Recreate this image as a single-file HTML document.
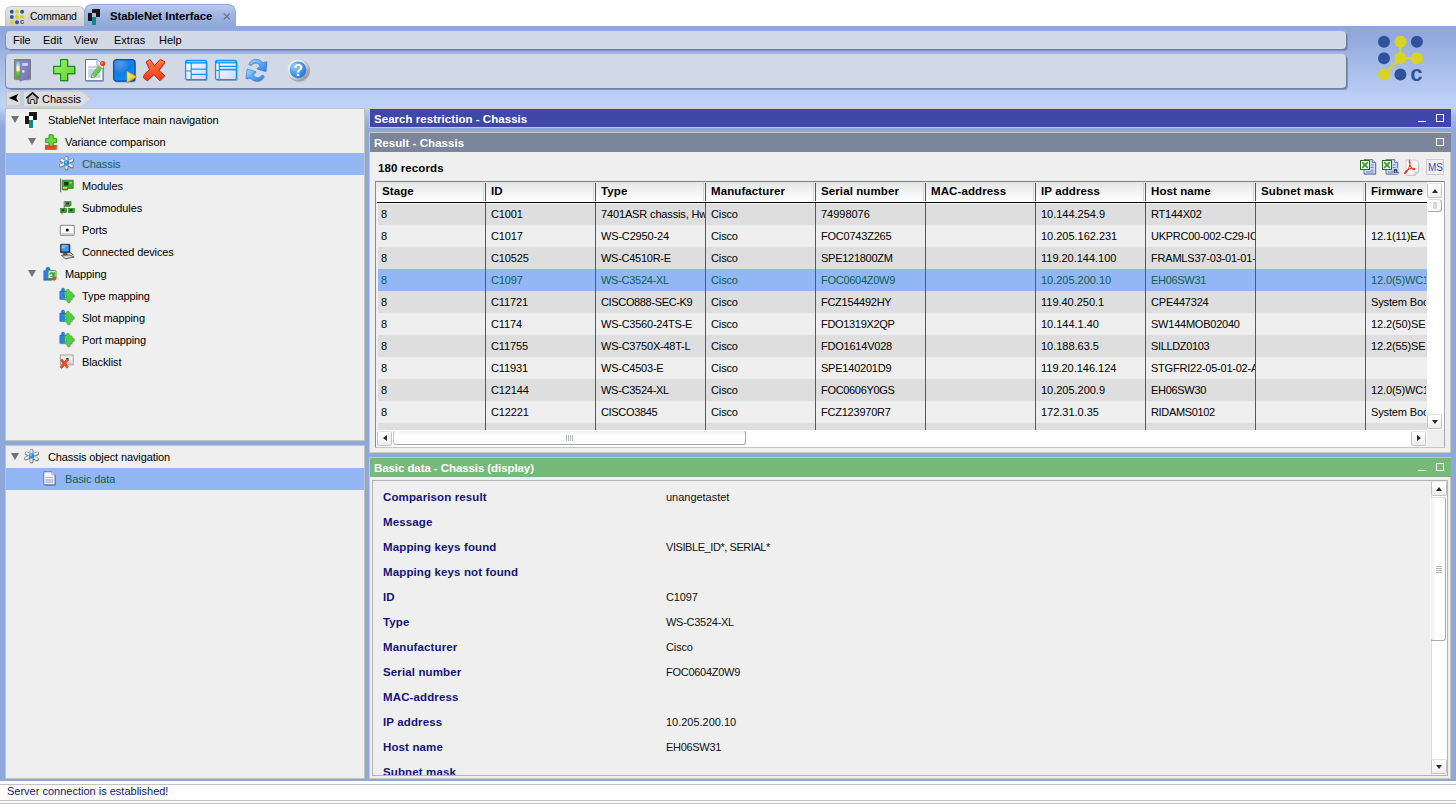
<!DOCTYPE html>
<html lang="en">
<head>
<meta charset="utf-8">
<title>StableNet Interface</title>
<style>
*{box-sizing:border-box;margin:0;padding:0}
html,body{width:1456px;height:804px;overflow:hidden;background:#fff}
body{position:relative;font-family:"Liberation Sans",Arial,sans-serif;font-size:11px;color:#000;line-height:1}
.abs{position:absolute}
svg{position:absolute;overflow:visible}
#hdrbg{position:absolute;left:0;top:26px;width:1456px;height:82px;background:linear-gradient(#8fa7da 0,#90a8dc 8px,#bccff4 72px,#c0d3f7 82px)}
#mainbg{position:absolute;left:0;top:108px;width:1456px;height:673px;background:linear-gradient(#bdd0f5 0,#a3b9e6 9px,#8fa8dc 20px,#8fa8dc 100%)}
/* tabs */
.tab{position:absolute;white-space:nowrap}
#tab1{left:5px;top:6px;width:80px;height:20px;background:linear-gradient(#e6e6e6,#cdcdcd);border:1px solid #c6c6c6;border-bottom:none;border-radius:6px 6px 0 0}
#tab2{left:84px;top:4px;width:152px;height:22px;background:linear-gradient(#bccbef,#a0b5e3 45%,#8fa7da);border:1px solid #8fa8de;border-bottom:none;border-radius:8px 8px 0 0}
#tab1 span{position:absolute;left:24px;top:4px;font-size:10.5px;letter-spacing:-.25px}
#tab2 span{position:absolute;left:25px;top:6px;font-weight:bold;font-size:11.3px}
#tab2 i{position:absolute;left:135px;top:3px;font-style:normal;font-size:13px;color:#6b7694}
/* bars */
.bar{position:absolute;left:6px;width:1340px;background:#d1d8e6;border-radius:4px;box-shadow:1px 1px 0 #6e7fa8,2px 2px 0 #8090b8,-1px 1px 0 #8091b9}
#menubar{top:31px;height:18px}
#toolbar{top:54px;height:34px}
#menubar span{position:absolute;top:4px;font-size:11px}
/* breadcrumb */
#back{position:absolute;left:6px;top:91px;width:15px;height:15px;background:#dcdcdc;border:1px solid #c8c8c8}
#crumb{position:absolute;left:23px;top:91px;width:68px;height:15px}
#crumb span{position:absolute;left:19px;top:3px;font-size:11px}
/* panels */
.panel{position:absolute;background:#efefef;border:1px solid #c2c2c2}
.trow{position:absolute;left:0;width:100%;height:22px}
.trow.sel{background:#93b6f5;color:#0a6350}
.trow span{position:absolute;top:6px;white-space:nowrap;letter-spacing:-.11px}
.tri{position:absolute;top:7px;width:0;height:0;border-left:4px solid transparent;border-right:4px solid transparent;border-top:7.5px solid #6e7575}
/* right headers */
.rp{position:absolute;left:369px;width:1082px;background:#efefef;border:1px solid #cbc8c2}
.hd{position:absolute;left:370px;width:1081px;height:19px;color:#fff;font-weight:bold;font-size:11.5px}
.hd span{position:absolute;left:4px;top:5px;letter-spacing:.04px;white-space:nowrap}
.hd .min{position:absolute;left:1048px;top:12px;width:8px;height:1px;background:#fff}
.hd .max{position:absolute;left:1066px;top:5px;width:8px;height:8px;border:1px solid #fff}
/* table */
#tbl{position:absolute;left:375px;top:181px;width:1070px;height:267px;border:1px solid #788282;border-right-color:#a2aaaa;border-bottom-color:#c2c6c6;border-left-color:#868e8e;background:#efefef}
#tin{position:absolute;left:1px;top:0;width:1050px;height:248px;overflow:hidden}
.th{position:absolute;top:0;height:20px;background:linear-gradient(#e5e5e5,#f4f4f4 50%,#ffffff);font-weight:bold;font-size:11.5px}
.th span{position:absolute;left:5px;top:4px;white-space:nowrap;letter-spacing:.1px}
#thline{position:absolute;left:0;top:20px;width:1050px;height:2px;background:linear-gradient(#0a0a0a 0,#0a0a0a 1px,rgba(255,255,255,.6) 1px)}
.hsep{position:absolute;top:1px;width:3px;height:18px;border-left:1px solid #d2d2d2;border-right:1px solid #585858}
.tr{position:absolute;left:1px;width:1049px;height:22px;background:#efefef}
.tr.odd{background:#dedede}
.tr.sel{background:#93b6f5;color:#0a6350}
.td{position:absolute;top:0;height:22px;overflow:hidden;white-space:nowrap;padding:6px 0 0 4px;font-size:11px;letter-spacing:-.25px}
.vsep{position:absolute;top:21px;width:1px;height:227px;background:#585858}
/* fields */
#bd{position:absolute;left:372px;top:480px;width:1076px;height:296px;overflow:hidden;border:1px solid #b4b4b4;background:#efefef}
.fk{position:absolute;left:10px;letter-spacing:.13px;font-weight:bold;font-size:11.5px;color:#14147a;white-space:nowrap;height:14px;line-height:14px}
.fv{position:absolute;left:293px;font-size:11px;letter-spacing:-.12px;white-space:nowrap;height:14px;line-height:14px;color:#111}
/* scrollbars */
.sb{position:absolute;background:#fff}
.sbtn{position:absolute;width:15px;height:15px;background:linear-gradient(#fff,#f6f6f6 60%,#ececec);border:1px solid #c4c4c4;border-top-color:#e4e4e4;border-radius:2px}
.thumb{position:absolute;border:1px solid #a8a8a8;border-radius:3px}
.arr{position:absolute;width:0;height:0}
#status{position:absolute;left:0;top:781px;width:1456px;height:23px;background:#fff;border-bottom:1px solid #b9cbea}
#status:before{content:"";position:absolute;left:0;top:3px;width:1456px;height:15px;border-top:1px solid #c2c2c2;border-bottom:1px solid #c2c2c2}
#status span{position:absolute;left:7px;top:5px;color:#14147a;font-size:11px}
</style>
</head>
<body>
<div id="hdrbg"></div>
<div id="mainbg"></div>

<!-- tabs -->
<div class="tab" id="tab1"><span>Command</span></div>
<div class="tab" id="tab2"><span>StableNet Interface</span><svg style="left:138px;top:7px" width="8" height="9" viewBox="0 0 8 9"><path d="M.8 1.300L6.800 7.300M6.800 1.300L.8 7.300" stroke="#666e84" stroke-width="1.100"/></svg></div>

<!-- menu -->
<div class="bar" id="menubar">
<span style="left:7px">File</span><span style="left:37px">Edit</span><span style="left:68px">View</span><span style="left:108px">Extras</span><span style="left:153px">Help</span>
</div>
<div class="bar" id="toolbar"></div>
<svg width="0" height="0" style="left:0;top:0">
<defs>
<linearGradient id="gsky" x1="0" y1="0" x2="0" y2="1"><stop offset="0" stop-color="#62baff"/><stop offset=".38" stop-color="#ffffff"/><stop offset=".56" stop-color="#fff07a"/><stop offset=".64" stop-color="#66d822"/><stop offset="1" stop-color="#3fae10"/></linearGradient>
<linearGradient id="gdoor" x1="0" y1="0" x2="1" y2="1"><stop offset="0" stop-color="#9090cc"/><stop offset="1" stop-color="#7474b4"/></linearGradient>
<linearGradient id="gplus" x1="0" y1="0" x2="1" y2="1"><stop offset="0" stop-color="#a6f07a"/><stop offset=".5" stop-color="#7ee04c"/><stop offset="1" stop-color="#62d234"/></linearGradient>
<radialGradient id="gblue" cx=".3" cy=".2" r="1"><stop offset="0" stop-color="#5a9be6"/><stop offset=".45" stop-color="#0f7ee6"/><stop offset="1" stop-color="#0a96ff"/></radialGradient>
<linearGradient id="gyel" x1="0" y1="0" x2="1" y2="1"><stop offset="0" stop-color="#fff27a"/><stop offset="1" stop-color="#e0b818"/></linearGradient>
<linearGradient id="gred" x1="0" y1="0" x2="0" y2="1"><stop offset="0" stop-color="#ff7a4a"/><stop offset="1" stop-color="#ee3a10"/></linearGradient>
<linearGradient id="gtab" x1="0" y1="0" x2="1" y2="1"><stop offset="0" stop-color="#ffffff"/><stop offset="1" stop-color="#d6d6ff"/></linearGradient>
<linearGradient id="garr" x1="0" y1="0" x2="1" y2="1"><stop offset="0" stop-color="#b4daff"/><stop offset=".5" stop-color="#58a8f6"/><stop offset="1" stop-color="#2a82e4"/></linearGradient>
<linearGradient id="garr2" x1="1" y1="1" x2="0" y2="0"><stop offset="0" stop-color="#b4daff"/><stop offset=".5" stop-color="#58a8f6"/><stop offset="1" stop-color="#2a82e4"/></linearGradient>
<radialGradient id="ghelp" cx=".3" cy=".3" r=".8"><stop offset="0" stop-color="#9ccfff"/><stop offset=".6" stop-color="#3f93ec"/><stop offset="1" stop-color="#1f78de"/></radialGradient>
<linearGradient id="gring" x1="0" y1="0" x2="1" y2="1"><stop offset="0" stop-color="#ffffff"/><stop offset=".55" stop-color="#d4d4d4"/><stop offset="1" stop-color="#7c7c7c"/></linearGradient>
<linearGradient id="gpen" x1="0" y1="0" x2="1" y2="1"><stop offset="0" stop-color="#a0f080"/><stop offset="1" stop-color="#28b020"/></linearGradient>
</defs>
</svg>
<!-- door -->
<svg style="left:14px;top:59px" width="18" height="23" viewBox="0 0 18 23">
<rect x="1.6" y="1.6" width="15.2" height="20" fill="#a9adb8" opacity=".6"/>
<rect x=".6" y=".6" width="15.8" height="19.6" fill="#8c8c8c" stroke="#787878" stroke-width="1"/>
<rect x="2.4" y="2.6" width="5" height="16.4" fill="url(#gsky)"/>
<polygon points="6,1.9 15.4,.9 15.4,18.6 6,22.3" fill="url(#gdoor)" stroke="#6e6eae" stroke-width=".6"/>
<rect x="8.3" y="4.1" width="5.6" height="2.7" fill="#d4d4f4"/>
<rect x="8.1" y="11.2" width="2.3" height="2.3" fill="#e8e4c4"/>
</svg>
<!-- plus -->
<svg style="left:52px;top:58px" width="26" height="26" viewBox="0 0 26 26">
<path d="M8.600 1.600h7v6.800h7.100v7.300h-7.100v6.900h-7v-6.900h-7v-7.300h7z" fill="#6f6a84" opacity=".5" transform="translate(.9 .9)"/>
<path d="M8.600 1.600h7v6.800h7.100v7.300h-7.100v6.900h-7v-6.900h-7v-7.300h7z" fill="url(#gplus)" stroke="#0b9a0b" stroke-width="1.200" stroke-linejoin="round"/>
</svg>
<!-- edit -->
<svg style="left:84px;top:58px" width="24" height="26" viewBox="0 0 24 26">
<path d="M2.200 2.600h11.400l6.400 5.600v15.600H2.200z" fill="#6a708c" opacity=".55"/>
<path d="M1.500 1.500h11.300l6.200 5.800v15.400H1.500z" fill="#fdfdff" stroke="#5a70a8" stroke-width="1"/>
<path d="M12.800 1.500v5.800h6.200" fill="#e4e8f6" stroke="#8a9ac4" stroke-width=".8"/>
<rect x="4.200" y="8.200" width="12.200" height="1.800" fill="#c4c8e2"/>
<rect x="4.200" y="10.800" width="12.200" height="9" fill="#c8cee8"/>
<path d="M7.700 16.600L15.100 7.400 18.300 10 10.900 19.200 7.400 19.800z" fill="url(#gpen)" stroke="#1f9a1f" stroke-width=".5"/>
<path d="M7.970 16.830L7.200 20.100 10.630 18.970z" fill="#e8cfa4"/><path d="M7.200 20.100l.4-1.600 1.200 1.100z" fill="#444"/>
<path d="M15.100 7.400l1.100-1.350 3.200 2.600-1.100 1.350z" fill="#f6f6f6"/>
<circle cx="18.700" cy="5.500" r="2.600" fill="#e8401c"/><circle cx="18.100" cy="4.900" r="1" fill="#ff8a60"/>
</svg>
<!-- blue square with play -->
<svg style="left:112px;top:58px" width="27" height="27" viewBox="0 0 27 27">
<rect x="2.4" y="2.4" width="21.6" height="22" rx="3.2" fill="#666a84" opacity=".5"/>
<rect x="1.6" y="1.6" width="21.4" height="21.6" rx="3" fill="url(#gblue)" stroke="#1748b0" stroke-width="1.2"/>
<path d="M15.6 14.2v10.8l9.2-5.4z" fill="#7a7440" opacity=".6"/>
<path d="M15 13.4v11l9.6-5.6z" fill="url(#gyel)" stroke="#c8a010" stroke-width=".7" stroke-linejoin="round"/>
</svg>
<!-- red X -->
<svg style="left:142px;top:58px" width="26" height="26" viewBox="0 0 26 26">
<path d="M7.800 1.300L12.500 7.700 18.300 1.300 23 4 16.800 12.400 22.700 17.600 17.700 22.600 11.900 16.400 5.100 22.600 1.400 19.800 2.300 16.400 7.500 11.500 4.100 4z" fill="#6a6478" opacity=".5" transform="translate(.9 .9)"/>
<path d="M7.800 1.300L12.500 7.700 18.300 1.300 23 4 16.800 12.400 22.700 17.600 17.700 22.600 11.900 16.400 5.100 22.600 1.400 19.800 2.300 16.400 7.500 11.500 4.100 4z" fill="url(#gred)" stroke="#d4200c" stroke-width="1" stroke-linejoin="round"/>
</svg>
<!-- table icon 1 -->
<svg style="left:184px;top:59px" width="26" height="24" viewBox="0 0 26 24">
<rect x="2" y="2" width="21.6" height="20" rx="1.6" fill="#666a84" opacity=".5"/>
<rect x="1.6" y="1.5" width="20.8" height="19.2" rx="1.4" fill="url(#gtab)" stroke="#0f96fa" stroke-width="1.3"/>
<rect x="2" y="2" width="20" height="2.600" fill="#0f96fa"/><path d="M3 2.700H21.200" stroke="#d8ecff" stroke-width=".7"/>
<path d="M7.2 4v16.5M7.2 10.2h15M7.2 15.4h15M2 12h5.2" stroke="#0f96fa" stroke-width="1.2" fill="none"/>
</svg>
<!-- table icon 2 -->
<svg style="left:214px;top:59px" width="26" height="24" viewBox="0 0 26 24">
<rect x="2" y="2" width="21.6" height="20" rx="1.6" fill="#666a84" opacity=".5"/>
<rect x="1.6" y="1.5" width="20.8" height="19.2" rx="1.4" fill="url(#gtab)" stroke="#0f96fa" stroke-width="1.3"/>
<rect x="2" y="2" width="20" height="2.400" fill="#0f96fa"/><path d="M3 2.700H21.200" stroke="#d8ecff" stroke-width=".7"/>
<path d="M5.2 4v16.5M5.2 7.4h17M2 11.5h3.2" stroke="#0f96fa" stroke-width="1.1" fill="none"/>
<path d="M5.2 10.6h17" stroke="#0f96fa" stroke-width="1.6" fill="none"/>
</svg>
<!-- refresh -->
<svg style="left:244px;top:58px" width="26" height="26" viewBox="0 0 26 26">
<g transform="translate(.8 .9)" opacity=".4" fill="#4a5274"><path d="M4.700 6.300C6.400 3 9 1.300 11.700 1.300C14.600 1.300 17.100 2.600 18.900 4.700L22.800 3.600L21.700 13.400L12.800 10.700L16.100 8.400C14.900 6 13.300 4.700 11.500 4.700C9.500 4.700 7.800 5.700 6.700 7.300Z"/><path d="M4.700 6.300C6.400 3 9 1.300 11.700 1.300C14.600 1.300 17.100 2.600 18.900 4.700L22.800 3.600L21.700 13.400L12.800 10.700L16.100 8.400C14.900 6 13.300 4.700 11.500 4.700C9.500 4.700 7.800 5.700 6.700 7.300Z" transform="rotate(180 12.400 12.200)"/></g>
<path d="M4.700 6.300C6.400 3 9 1.300 11.700 1.300C14.600 1.300 17.100 2.600 18.900 4.700L22.800 3.600L21.700 13.400L12.800 10.700L16.100 8.400C14.900 6 13.300 4.700 11.500 4.700C9.500 4.700 7.800 5.700 6.700 7.300Z" fill="url(#garr)" stroke="#2f80dc" stroke-width=".7" stroke-linejoin="round"/>
<path d="M4.700 6.300C6.400 3 9 1.300 11.700 1.300C14.600 1.300 17.100 2.600 18.900 4.700L22.800 3.600L21.700 13.400L12.800 10.700L16.100 8.400C14.900 6 13.300 4.700 11.500 4.700C9.500 4.700 7.800 5.700 6.700 7.300Z" transform="rotate(180 12.400 12.200)" fill="url(#garr2)" stroke="#2f80dc" stroke-width=".7" stroke-linejoin="round"/>
</svg>
<!-- help -->
<svg style="left:286px;top:58px" width="26" height="26" viewBox="0 0 26 26">
<circle cx="13" cy="12.800" r="11" fill="#60647c" opacity=".45"/>
<circle cx="12.300" cy="12" r="10.600" fill="url(#gring)"/>
<circle cx="12" cy="11.800" r="8.400" fill="url(#ghelp)"/>
<text x="12.100" y="17.600" text-anchor="middle" font-family="Liberation Sans,Arial,sans-serif" font-weight="bold" font-size="16" fill="#fff">?</text>
</svg>


<!-- breadcrumb -->
<div id="back"></div>
<svg style="left:8px;top:93px" width="12" height="10" viewBox="0 0 12 10"><path d="M.8 4.900L10.400.800 8.300 4.900 10.400 9z" fill="#000"/></svg>
<svg style="left:23px;top:91px" width="68" height="16" viewBox="0 0 68 16"><path d="M.5.500H58.800L67.200 7.900 58.800 15.500H.5z" fill="#dedede" stroke="#cdcdcd" stroke-width="1"/>
<path d="M3.200 7.300L9.500 1.600 15.800 7.300" fill="none" stroke="#000" stroke-width="1.300"/><path d="M5 6.500V12.300H8V8.600H11V12.300H14V6.500L9.500 2.600z" fill="#b9b9b9" stroke="#000" stroke-width=".9"/><rect x="8.400" y="9" width="2.200" height="3.600" fill="#e8e8e8"/></svg>
<div id="crumb"><span>Chassis</span></div>

<!-- left top panel -->
<div class="panel" id="lp1" style="left:5px;top:108px;width:360px;height:333px">
<div class="trow" style="top:0"><i class="tri" style="left:5px"></i><span style="left:42px">StableNet Interface main navigation</span></div>
<div class="trow" style="top:22px"><i class="tri" style="left:22px"></i><span style="left:59px">Variance comparison</span></div>
<div class="trow sel" style="top:44px"><span style="left:76px">Chassis</span></div>
<div class="trow" style="top:66px"><span style="left:76px">Modules</span></div>
<div class="trow" style="top:88px"><span style="left:76px">Submodules</span></div>
<div class="trow" style="top:110px"><span style="left:76px">Ports</span></div>
<div class="trow" style="top:132px"><span style="left:76px">Connected devices</span></div>
<div class="trow" style="top:154px"><i class="tri" style="left:22px"></i><span style="left:59px">Mapping</span></div>
<div class="trow" style="top:176px"><span style="left:76px">Type mapping</span></div>
<div class="trow" style="top:198px"><span style="left:76px">Slot mapping</span></div>
<div class="trow" style="top:220px"><span style="left:76px">Port mapping</span></div>
<div class="trow" style="top:242px"><span style="left:76px">Blacklist</span></div>
</div>

<!-- left bottom panel -->
<div class="panel" id="lp2" style="left:5px;top:445px;width:360px;height:334px">
<div class="trow" style="top:0"><i class="tri" style="left:5px"></i><span style="left:42px">Chassis object navigation</span></div>
<div class="trow sel" style="top:22px"><span style="left:59px">Basic data</span></div>
</div>

<!-- tree icons (absolute page coords) -->
<svg width="0" height="0" style="left:0;top:0"><defs>
<g id="snlogo"><rect x="3" y="-1" width="10" height="10" fill="#fff" opacity=".9"/><rect x="-1" y="3" width="6" height="10" fill="#fff" opacity=".9"/><rect x="3" y="7" width="6" height="10" fill="#fff" opacity=".9"/>
<rect x="4" y="0" width="8" height="8" fill="#1c1614"/><rect x="0" y="4" width="4" height="8" fill="#1c1614"/><rect x="4" y="4" width="4" height="4" fill="#fff"/><rect x="4" y="8" width="4" height="8" fill="#0c8c86"/></g>
<g id="chassis">
<g stroke="#70767e" stroke-width="3.800" stroke-linecap="round"><path d="M7.600 1.900V12.600M2 9.600L13.300 4.600M2.600 4.400L13 10.400"/></g>
<g stroke="#eceef2" stroke-width="2.300" stroke-linecap="round"><path d="M7.400 1.800V12.300M1.900 9.300L13.100 4.300M2.500 4.100L12.800 10"/></g>
<circle cx="7.600" cy="7" r="2.700" fill="#1e8cf4"/><circle cx="7.100" cy="6.400" r="1.100" fill="#86c8ff"/></g>
<g id="puzzle">
<g fill="#2f80e4" stroke="#1a58b8" stroke-width=".5"><rect x=".800" y="4" width="6.400" height="8.600" rx=".6"/><circle cx="4" cy="2.700" r="1.600"/></g>
<g fill="#5c6470" opacity=".45" transform="translate(.7 .8)"><rect x="5.600" y="4.800" width="7.400" height="8" rx=".8"/><circle cx="13.600" cy="8.600" r="1.600"/><circle cx="9.500" cy="14" r="1.600"/></g>
<g fill="#4fd236" stroke="#2aa41c" stroke-width=".5"><circle cx="8.800" cy="3.800" r="1.600"/><circle cx="13.600" cy="8.600" r="1.600"/><circle cx="9.500" cy="14" r="1.600"/><rect x="5.600" y="4.800" width="7.400" height="8" rx=".8"/></g>
<rect x="5.900" y="5.100" width="6.800" height="7.400" fill="#4fd236"/><circle cx="8.800" cy="4.400" r="1.300" fill="#4fd236"/><circle cx="13" cy="8.600" r="1.300" fill="#4fd236"/><circle cx="9.500" cy="13.400" r="1.300" fill="#4fd236"/>
<circle cx="6.300" cy="9.300" r="1.500" fill="#2f80e4"/><circle cx="6.600" cy="9.100" r=".7" fill="#e8f0ff"/>
</g>
</defs></svg>
<svg style="left:25px;top:112px" width="16" height="18"><use href="#snlogo"/></svg>
<!-- variance -->
<svg style="left:44px;top:134px" width="15" height="17" viewBox="0 0 15 17">
<rect x="1.300" y="11.200" width="11.200" height="4.200" fill="#f0481c" stroke="#c8300c" stroke-width=".6"/>
<path d="M5 .800h4.200v3.600h3.400v4.200H9.200v3.400H5V8.600H1.600V4.400H5z" fill="#6cd83c" stroke="#1e9a14" stroke-width=".9" stroke-linejoin="round"/>
</svg>
<svg style="left:59px;top:156px" width="16" height="15"><use href="#chassis"/></svg>
<!-- modules -->
<svg style="left:59px;top:178px" width="16" height="16" viewBox="0 0 16 16">
<path d="M1.600.600V14.200" stroke="#6c7070" stroke-width="1.200"/><path d="M2.600 1.500V13" stroke="#e8e8e8" stroke-width="1"/>
<path d="M3.200 2.200H14.200V10.400H8.600V12H3.200z" fill="#3ea82a" stroke="#1c7c14" stroke-width=".7"/>
<rect x="5.200" y="4" width="4.200" height="3.600" fill="#2a2a2a"/><rect x="10.600" y="3.800" width="2.200" height="2" fill="#8ad86a"/><rect x="4" y="9" width="4" height="1.600" fill="#e8d040"/>
</svg>
<!-- submodules -->
<svg style="left:59px;top:200px" width="17" height="16" viewBox="0 0 17 16">
<path d="M5.200.800V9M5.200 6.500H11M3 9.500V14.500" stroke="#707470" stroke-width=".9" fill="none"/>
<rect x="6.200" y="1.600" width="5.800" height="4.200" fill="#3ea82a" stroke="#1c7c14" stroke-width=".6"/><rect x="7.400" y="2.600" width="2.600" height="1.800" fill="#2a2a2a"/>
<rect x="1.600" y="8.400" width="5.800" height="4.200" fill="#3ea82a" stroke="#1c7c14" stroke-width=".6"/><rect x="2.800" y="9.400" width="2.600" height="1.800" fill="#2a2a2a"/>
<rect x="9.600" y="8.400" width="5.800" height="4.200" fill="#3ea82a" stroke="#1c7c14" stroke-width=".6"/><rect x="10.800" y="9.400" width="2.600" height="1.800" fill="#2a2a2a"/>
</svg>
<!-- ports -->
<svg style="left:59px;top:224px" width="17" height="13" viewBox="0 0 17 13">
<rect x="1.300" y="1.300" width="14" height="10" rx="1" fill="#fafafa" stroke="#9c9c9c" stroke-width="1.300"/><rect x="2.500" y="9.200" width="12" height="1.600" fill="#c8c8c8"/>
<circle cx="8.300" cy="6" r="1.600" fill="#111"/>
</svg>
<!-- connected devices -->
<svg style="left:59px;top:243px" width="17" height="17" viewBox="0 0 17 17">
<rect x="1.400" y="1.200" width="9.600" height="8.600" rx=".8" fill="#2c3440" stroke="#20262e" stroke-width=".6"/>
<rect x="2.600" y="2.300" width="7.200" height="6" fill="#3c9cf4"/><path d="M2.600 2.300h7.200L2.600 6z" fill="#7cc0ff"/>
<path d="M4.400 10h3.600l.6 2H3.800z" fill="#50565e"/>
<path d="M2.400 12.400l8.400-.4 4.400 2-8.600 1.800z" fill="#d8d8d8" stroke="#3a3e44" stroke-width=".8"/>
<path d="M10.800 9.400l3.600 2.600" stroke="#3a3e44" stroke-width="1"/>
</svg>
<!-- mapping -->
<svg style="left:43px;top:266px" width="16" height="16" viewBox="0 0 16 16">
<path d="M.800 4.800h2.400c-.8-2 .2-3.600 1.800-3.600s2.600 1.600 1.800 3.600h2.400v9.400H.800z" fill="#2f7fe0" stroke="#1a58b8" stroke-width=".6"/>
<rect x="5" y="4.600" width="8" height="8" rx="1" fill="#e8f4e4" stroke="#2a9a2a" stroke-width=".9"/>
<path d="M6.400 8.200c.4-2 3-2.600 4.400-1.200l.8-.8v2.800H8.800l.9-.9c-.8-.8-2-.5-2.300.4zM11.600 9c-.4 2-3 2.600-4.400 1.200" fill="#2aa82a" stroke="#2aa82a" stroke-width=".5"/>
<path d="M10.200 14.200c-1.400-1.800-.2-3 .6-4.400.2 1.200 1 1.400 1.200.4 1.600 1.400 1.400 3 .2 4z" fill="#f0481c" stroke="#c82c0c" stroke-width=".4"/>
</svg>
<svg style="left:59px;top:287px" width="17" height="17"><use href="#puzzle"/></svg>
<svg style="left:59px;top:309px" width="17" height="17"><use href="#puzzle"/></svg>
<svg style="left:59px;top:331px" width="17" height="17"><use href="#puzzle"/></svg>
<!-- blacklist -->
<svg style="left:59px;top:354px" width="16" height="16" viewBox="0 0 16 16">
<rect x="1.400" y="1" width="12.800" height="9.800" fill="#ececec" stroke="#a4a4a4" stroke-width="1"/><rect x="2.400" y="8.400" width="11" height="1.800" fill="#c4c4c4"/>
<rect x="7.400" y="4" width="2" height="2" fill="#111"/>
<path d="M1.400 6.400L3 5l2.400 2.800L8 4.800l1.600 1.400L6.800 9.600l2.600 3.200-1.600 1.400-2.400-3-2.600 3.200L1 13l2.800-3.400z" fill="#f04a20" stroke="#c82c0c" stroke-width=".5"/>
</svg>
<!-- bottom tree -->
<svg style="left:24px;top:449px" width="16" height="15"><use href="#chassis"/></svg>
<svg style="left:43px;top:471px" width="14" height="16" viewBox="0 0 14 16">
<path d="M1.600 1.800h8l3.200 3v10h-11.200z" fill="#5c6684" opacity=".6"/>
<path d="M.800.800h8l3.200 3v10H.800z" fill="#fbfbff" stroke="#5a6a98" stroke-width=".9"/>
<path d="M8.800.800v3h3.200" fill="#dfe4f4" stroke="#7a88b4" stroke-width=".7"/>
<rect x="2.400" y="5.800" width="8" height="1.400" fill="#b4bcd8"/><rect x="2.400" y="8" width="8" height="4.400" fill="#c2c8e4"/>
</svg>

<!-- right: search restriction -->
<div class="rp" style="top:108px;height:20px"></div>
<div class="hd" style="top:109px;height:18px;background:#3f47a8"><span>Search restriction - Chassis</span><i class="min"></i><i class="max"></i></div>

<!-- right: result -->
<div class="rp" style="top:132px;height:321px"></div>
<div class="hd" style="top:133px;background:#7b859b"><span>Result - Chassis</span><i class="max"></i></div>
<div class="abs" style="left:378px;top:163px;font-weight:bold;font-size:11.5px;letter-spacing:.1px">180 records</div>

<div id="tbl">
 <div id="tin">
  <div class="th" style="left:0px;width:109px"><span>Stage</span></div><div class="th" style="left:109px;width:110px"><span>ID</span></div><div class="th" style="left:219px;width:110px"><span>Type</span></div><div class="th" style="left:329px;width:110px"><span>Manufacturer</span></div><div class="th" style="left:439px;width:110px"><span>Serial number</span></div><div class="th" style="left:549px;width:110px"><span>MAC-address</span></div><div class="th" style="left:659px;width:110px"><span>IP address</span></div><div class="th" style="left:769px;width:110px"><span>Host name</span></div><div class="th" style="left:879px;width:110px"><span>Subnet mask</span></div><div class="th" style="left:989px;width:61px"><span>Firmware</span></div>
  <div class="tr odd" style="top:21px"><div class="td" style="left:-1px;width:108px;letter-spacing:-0.02px">8</div><div class="td" style="left:109px;width:108px;letter-spacing:-0.13px">C1001</div><div class="td" style="left:219px;width:108px;letter-spacing:-0.14px">7401ASR chassis, Hw</div><div class="td" style="left:329px;width:108px;letter-spacing:-0.13px">Cisco</div><div class="td" style="left:439px;width:108px;letter-spacing:-0.02px">74998076</div><div class="td" style="left:549px;width:108px;letter-spacing:-0.02px"></div><div class="td" style="left:659px;width:108px;letter-spacing:-0.02px">10.144.254.9</div><div class="td" style="left:769px;width:108px;letter-spacing:-0.23px">RT144X02</div><div class="td" style="left:879px;width:108px;letter-spacing:-0.02px"></div><div class="td" style="left:989px;width:59px;letter-spacing:-0.02px"></div></div><div class="tr" style="top:43px"><div class="td" style="left:-1px;width:108px;letter-spacing:-0.02px">8</div><div class="td" style="left:109px;width:108px;letter-spacing:-0.13px">C1017</div><div class="td" style="left:219px;width:108px;letter-spacing:-0.17px">WS-C2950-24</div><div class="td" style="left:329px;width:108px;letter-spacing:-0.13px">Cisco</div><div class="td" style="left:439px;width:108px;letter-spacing:-0.22px">FOC0743Z265</div><div class="td" style="left:549px;width:108px;letter-spacing:-0.02px"></div><div class="td" style="left:659px;width:108px;letter-spacing:-0.02px">10.205.162.231</div><div class="td" style="left:769px;width:108px;letter-spacing:-0.26px">UKPRC00-002-C29-IC</div><div class="td" style="left:879px;width:108px;letter-spacing:-0.02px"></div><div class="td" style="left:989px;width:59px;letter-spacing:-0.12px">12.1(11)EA1</div></div><div class="tr odd" style="top:65px"><div class="td" style="left:-1px;width:108px;letter-spacing:-0.02px">8</div><div class="td" style="left:109px;width:108px;letter-spacing:-0.11px">C10525</div><div class="td" style="left:219px;width:108px;letter-spacing:-0.27px">WS-C4510R-E</div><div class="td" style="left:329px;width:108px;letter-spacing:-0.13px">Cisco</div><div class="td" style="left:439px;width:108px;letter-spacing:-0.27px">SPE121800ZM</div><div class="td" style="left:549px;width:108px;letter-spacing:-0.02px"></div><div class="td" style="left:659px;width:108px;letter-spacing:-0.02px">119.20.144.100</div><div class="td" style="left:769px;width:108px;letter-spacing:-0.20px">FRAMLS37-03-01-01-</div><div class="td" style="left:879px;width:108px;letter-spacing:-0.02px"></div><div class="td" style="left:989px;width:59px;letter-spacing:-0.02px"></div></div><div class="tr sel" style="top:87px"><div class="td" style="left:-1px;width:108px;letter-spacing:-0.02px">8</div><div class="td" style="left:109px;width:108px;letter-spacing:-0.13px">C1097</div><div class="td" style="left:219px;width:108px;letter-spacing:-0.27px">WS-C3524-XL</div><div class="td" style="left:329px;width:108px;letter-spacing:-0.13px">Cisco</div><div class="td" style="left:439px;width:108px;letter-spacing:-0.27px">FOC0604Z0W9</div><div class="td" style="left:549px;width:108px;letter-spacing:-0.02px"></div><div class="td" style="left:659px;width:108px;letter-spacing:-0.02px">10.205.200.10</div><div class="td" style="left:769px;width:108px;letter-spacing:-0.30px">EH06SW31</div><div class="td" style="left:879px;width:108px;letter-spacing:-0.02px"></div><div class="td" style="left:989px;width:59px;letter-spacing:-0.13px">12.0(5)WC1</div></div><div class="tr odd" style="top:109px"><div class="td" style="left:-1px;width:108px;letter-spacing:-0.02px">8</div><div class="td" style="left:109px;width:108px;letter-spacing:-0.11px">C11721</div><div class="td" style="left:219px;width:108px;letter-spacing:-0.35px">CISCO888-SEC-K9</div><div class="td" style="left:329px;width:108px;letter-spacing:-0.13px">Cisco</div><div class="td" style="left:439px;width:108px;letter-spacing:-0.27px">FCZ154492HY</div><div class="td" style="left:549px;width:108px;letter-spacing:-0.02px"></div><div class="td" style="left:659px;width:108px;letter-spacing:-0.02px">119.40.250.1</div><div class="td" style="left:769px;width:108px;letter-spacing:-0.20px">CPE447324</div><div class="td" style="left:879px;width:108px;letter-spacing:-0.02px"></div><div class="td" style="left:989px;width:59px;letter-spacing:-0.13px">System Boo</div></div><div class="tr" style="top:131px"><div class="td" style="left:-1px;width:108px;letter-spacing:-0.02px">8</div><div class="td" style="left:109px;width:108px;letter-spacing:-0.13px">C1174</div><div class="td" style="left:219px;width:108px;letter-spacing:-0.24px">WS-C3560-24TS-E</div><div class="td" style="left:329px;width:108px;letter-spacing:-0.13px">Cisco</div><div class="td" style="left:439px;width:108px;letter-spacing:-0.32px">FDO1319X2QP</div><div class="td" style="left:549px;width:108px;letter-spacing:-0.02px"></div><div class="td" style="left:659px;width:108px;letter-spacing:-0.02px">10.144.1.40</div><div class="td" style="left:769px;width:108px;letter-spacing:-0.23px">SW144MOB02040</div><div class="td" style="left:879px;width:108px;letter-spacing:-0.02px"></div><div class="td" style="left:989px;width:59px;letter-spacing:-0.12px">12.2(50)SE3</div></div><div class="tr odd" style="top:153px"><div class="td" style="left:-1px;width:108px;letter-spacing:-0.02px">8</div><div class="td" style="left:109px;width:108px;letter-spacing:-0.11px">C11755</div><div class="td" style="left:219px;width:108px;letter-spacing:-0.24px">WS-C3750X-48T-L</div><div class="td" style="left:329px;width:108px;letter-spacing:-0.13px">Cisco</div><div class="td" style="left:439px;width:108px;letter-spacing:-0.22px">FDO1614V028</div><div class="td" style="left:549px;width:108px;letter-spacing:-0.02px"></div><div class="td" style="left:659px;width:108px;letter-spacing:-0.02px">10.188.63.5</div><div class="td" style="left:769px;width:108px;letter-spacing:-0.35px">SILLDZ0103</div><div class="td" style="left:879px;width:108px;letter-spacing:-0.02px"></div><div class="td" style="left:989px;width:59px;letter-spacing:-0.12px">12.2(55)SE3</div></div><div class="tr" style="top:175px"><div class="td" style="left:-1px;width:108px;letter-spacing:-0.02px">8</div><div class="td" style="left:109px;width:108px;letter-spacing:-0.11px">C11931</div><div class="td" style="left:219px;width:108px;letter-spacing:-0.24px">WS-C4503-E</div><div class="td" style="left:329px;width:108px;letter-spacing:-0.13px">Cisco</div><div class="td" style="left:439px;width:108px;letter-spacing:-0.22px">SPE140201D9</div><div class="td" style="left:549px;width:108px;letter-spacing:-0.02px"></div><div class="td" style="left:659px;width:108px;letter-spacing:-0.02px">119.20.146.124</div><div class="td" style="left:769px;width:108px;letter-spacing:-0.22px">STGFRI22-05-01-02-A</div><div class="td" style="left:879px;width:108px;letter-spacing:-0.02px"></div><div class="td" style="left:989px;width:59px;letter-spacing:-0.02px"></div></div><div class="tr odd" style="top:197px"><div class="td" style="left:-1px;width:108px;letter-spacing:-0.02px">8</div><div class="td" style="left:109px;width:108px;letter-spacing:-0.11px">C12144</div><div class="td" style="left:219px;width:108px;letter-spacing:-0.27px">WS-C3524-XL</div><div class="td" style="left:329px;width:108px;letter-spacing:-0.13px">Cisco</div><div class="td" style="left:439px;width:108px;letter-spacing:-0.32px">FOC0606Y0GS</div><div class="td" style="left:549px;width:108px;letter-spacing:-0.02px"></div><div class="td" style="left:659px;width:108px;letter-spacing:-0.02px">10.205.200.9</div><div class="td" style="left:769px;width:108px;letter-spacing:-0.30px">EH06SW30</div><div class="td" style="left:879px;width:108px;letter-spacing:-0.02px"></div><div class="td" style="left:989px;width:59px;letter-spacing:-0.13px">12.0(5)WC1</div></div><div class="tr" style="top:219px"><div class="td" style="left:-1px;width:108px;letter-spacing:-0.02px">8</div><div class="td" style="left:109px;width:108px;letter-spacing:-0.11px">C12221</div><div class="td" style="left:219px;width:108px;letter-spacing:-0.33px">CISCO3845</div><div class="td" style="left:329px;width:108px;letter-spacing:-0.13px">Cisco</div><div class="td" style="left:439px;width:108px;letter-spacing:-0.22px">FCZ123970R7</div><div class="td" style="left:549px;width:108px;letter-spacing:-0.02px"></div><div class="td" style="left:659px;width:108px;letter-spacing:-0.02px">172.31.0.35</div><div class="td" style="left:769px;width:108px;letter-spacing:-0.35px">RIDAMS0102</div><div class="td" style="left:879px;width:108px;letter-spacing:-0.02px"></div><div class="td" style="left:989px;width:59px;letter-spacing:-0.13px">System Boo</div></div><div class="tr odd" style="top:241px;height:8px"></div>
  <div id="thline"></div>
  <div class="vsep" style="left:108px"></div><div class="hsep" style="left:106px"></div><div class="vsep" style="left:218px"></div><div class="hsep" style="left:216px"></div><div class="vsep" style="left:328px"></div><div class="hsep" style="left:326px"></div><div class="vsep" style="left:438px"></div><div class="hsep" style="left:436px"></div><div class="vsep" style="left:548px"></div><div class="hsep" style="left:546px"></div><div class="vsep" style="left:658px"></div><div class="hsep" style="left:656px"></div><div class="vsep" style="left:768px"></div><div class="hsep" style="left:766px"></div><div class="vsep" style="left:878px"></div><div class="hsep" style="left:876px"></div><div class="vsep" style="left:988px"></div><div class="hsep" style="left:986px"></div>
 </div>
</div>

<!-- right: basic data -->
<div class="rp" style="top:457px;height:322px"></div>
<div class="hd" style="top:458px;background:#77b978"><span style="letter-spacing:-.08px">Basic data - Chassis (display)</span><i class="min"></i><i class="max"></i></div>
<div id="bd">
<div class="fk" style="top:9px">Comparison result</div><div class="fv" style="top:9px;letter-spacing:-0.02px">unangetastet</div><div class="fk" style="top:34px">Message</div><div class="fk" style="top:59px">Mapping keys found</div><div class="fv" style="top:59px;letter-spacing:-0.43px">VISIBLE_ID*, SERIAL*</div><div class="fk" style="top:84px">Mapping keys not found</div><div class="fk" style="top:109px">ID</div><div class="fv" style="top:109px;letter-spacing:-0.13px">C1097</div><div class="fk" style="top:134px">Type</div><div class="fv" style="top:134px;letter-spacing:-0.27px">WS-C3524-XL</div><div class="fk" style="top:159px">Manufacturer</div><div class="fv" style="top:159px;letter-spacing:-0.13px">Cisco</div><div class="fk" style="top:184px">Serial number</div><div class="fv" style="top:184px;letter-spacing:-0.27px">FOC0604Z0W9</div><div class="fk" style="top:209px">MAC-address</div><div class="fk" style="top:234px">IP address</div><div class="fv" style="top:234px;letter-spacing:-0.02px">10.205.200.10</div><div class="fk" style="top:259px">Host name</div><div class="fv" style="top:259px;letter-spacing:-0.30px">EH06SW31</div><div class="fk" style="top:284px">Subnet mask</div>
</div>

<!-- table scrollbars -->
<div class="sb" style="left:1427px;top:182px;width:17px;height:248px"></div>
<div class="sb" style="left:376px;top:430px;width:1051px;height:17px"></div>
<div class="sbtn" style="left:1427px;top:183px"></div>
<div class="arr" style="left:1432px;top:189px;border-left:3.500px solid transparent;border-right:3.500px solid transparent;border-bottom:4.500px solid #222a36"></div>
<div class="thumb" style="left:1427px;top:199px;width:15px;height:13px;background:linear-gradient(90deg,#fff,#f4f4f4);border-left-color:transparent;border-top-color:#dcdcdc"></div>
<div class="abs" style="left:1433px;top:202px;width:4px;height:7px;background:#d4d9d9"></div>
<div class="sbtn" style="left:1427px;top:414px"></div>
<div class="arr" style="left:1432px;top:420px;border-left:3.500px solid transparent;border-right:3.500px solid transparent;border-top:4.500px solid #222a36"></div>
<div class="sbtn" style="left:377px;top:431px"></div>
<div class="arr" style="left:383px;top:435px;border-top:3.500px solid transparent;border-bottom:3.500px solid transparent;border-right:4.500px solid #222a36"></div>
<div class="sbtn" style="left:1411px;top:431px"></div>
<div class="arr" style="left:1417px;top:435px;border-top:3.500px solid transparent;border-bottom:3.500px solid transparent;border-left:4.500px solid #222a36"></div>
<div class="thumb" style="left:393px;top:430px;width:353px;height:15px;background:linear-gradient(#f2f2f2,#fff 40%,#fcfcfc);border-top-color:transparent;border-left-color:#c8c8c8"></div>
<div class="abs" style="left:566px;top:435px;width:7px;height:6px;background:repeating-linear-gradient(90deg,#b4bcbc 0,#b4bcbc 1px,transparent 1px,transparent 2px)"></div>
<!-- basic data scrollbar -->
<div class="sb" style="left:1431px;top:481px;width:16px;height:294px;border-left:1px solid #dcdcdc"></div>
<div class="sbtn" style="left:1431px;top:481px;width:16px"></div>
<div class="arr" style="left:1436px;top:487px;border-left:3.500px solid transparent;border-right:3.500px solid transparent;border-bottom:4.500px solid #222a36"></div>
<div class="thumb" style="left:1430px;top:497px;width:16px;height:144px;background:linear-gradient(90deg,#f0f0f0,#fff 40%,#fcfcfc);border-left-color:transparent;border-top-color:#dcdcdc"></div>
<div class="abs" style="left:1436px;top:566px;width:6px;height:7px;background:repeating-linear-gradient(#b4bcbc 0,#b4bcbc 1px,transparent 1px,transparent 2px)"></div>
<div class="sbtn" style="left:1431px;top:759px;width:16px"></div>
<div class="arr" style="left:1436px;top:765px;border-left:3.500px solid transparent;border-right:3.500px solid transparent;border-top:4.500px solid #222a36"></div>

<!-- tab icons -->
<svg style="left:9px;top:9px" width="16" height="16" viewBox="0 0 16 16">
<path d="M8 3V8H13.200M8 8L3 13.200" stroke="#d8d424" stroke-width=".6" fill="none"/>
<g fill="#2f4fa0"><circle cx="2.800" cy="2.800" r="1.950"/><circle cx="13.100" cy="2.800" r="1.950"/><circle cx="2.800" cy="8" r="1.950"/><circle cx="8" cy="13.200" r="1.950"/></g>
<g fill="#d8d424"><circle cx="8" cy="2.800" r="1.950"/><circle cx="8" cy="8" r="1.950"/><circle cx="13.100" cy="8" r="1.950"/><circle cx="2.800" cy="13.200" r="1.950"/></g>
<text x="10.900" y="15.300" font-family="Liberation Sans,Arial,sans-serif" font-weight="bold" font-size="7.500" fill="#2f4fa0">c</text>
</svg>
<svg style="left:88px;top:9px" width="16" height="18" viewBox="0 0 16 18"><rect x="4" y="0" width="8" height="8" fill="#1c1614"/><rect x="0" y="4" width="4" height="8" fill="#1c1614"/><rect x="4" y="4" width="4" height="4" fill="#a9bce6"/><rect x="4" y="8" width="4" height="8" fill="#0c8c86"/></svg>
<!-- logo -->
<svg style="left:1376px;top:34px" width="50" height="50" viewBox="0 0 50 50">
<path d="M24.400 7.800V24.200H40.900M24.400 24.200L8 40.600" stroke="#d8d424" stroke-width="2.200" fill="none"/>
<g fill="#30529e"><circle cx="8" cy="7.800" r="6"/><circle cx="40.900" cy="7.800" r="6"/><circle cx="8" cy="24.200" r="6"/><circle cx="24.400" cy="40.600" r="6"/></g>
<g fill="#d8d424"><circle cx="24.400" cy="7.800" r="6"/><circle cx="24.400" cy="24.200" r="6"/><circle cx="40.900" cy="24.200" r="6"/><circle cx="8" cy="40.600" r="6"/></g>
<text x="34.300" y="46.600" font-family="Liberation Sans,Arial,sans-serif" font-weight="bold" font-size="22" fill="#30529e">c</text>
</svg>
<!-- export icons -->
<svg width="0" height="0" style="left:0;top:0"><defs>
<g id="xls">
<path d="M4.600 1.200h8.600l3 3v11.600H4.600z" fill="#5c6684" opacity=".5"/>
<path d="M4 .600h8.600l3 3V15H4z" fill="#cfdcf6" stroke="#4a5e98" stroke-width=".8"/>
<path d="M12.600.600v3h3" fill="#eef2fc" stroke="#3c5088" stroke-width=".7"/>
<path d="M10.600 6h3M10.600 8.500h3M10.600 11h3M6 13h7.600" stroke="#6c84bc" stroke-width="1"/>
<rect x=".500" y="1.500" width="9" height="9" fill="#f4faf2" stroke="#2a6e26" stroke-width="1"/>
<path d="M2.200 3.200L7.800 8.800M7.800 3.200L2.200 8.800" stroke="#3c9a36" stroke-width="1.900"/>
</g></defs></svg>
<svg style="left:1360px;top:159px" width="18" height="17"><use href="#xls"/></svg>
<svg style="left:1382px;top:159px" width="18" height="17"><use href="#xls"/><rect x="11" y="9" width="6" height="6" fill="#c4d4f2"/><text x="11.200" y="14.200" font-family="Liberation Sans,Arial,sans-serif" font-weight="bold" font-size="8" fill="#22306a">a</text><rect x="16.200" y="13.400" width="1" height="1" fill="#22306a"/></svg>
<!-- pdf -->
<svg style="left:1403px;top:159px" width="18" height="18" viewBox="0 0 18 18">
<path d="M3.600 1.600h8.600c2.600 0 4 1.400 4 3.600v7.600l-4.200 4H3.600z" fill="#8c8c8c" opacity=".5"/>
<path d="M3 1h8.600c2.600 0 4 1.400 4 3.600v7.600l-4.200 4H3z" fill="#f6f6f6" stroke="#c2c2c2" stroke-width=".7"/>
<path d="M11.400 16.200c.6-1.800.2-3 0-3.600 1.400.6 3 .4 4.200-.4z" fill="#dcdcdc" stroke="#bcbcbc" stroke-width=".4"/>
<path d="M6.400 1c-.4 2.200.6 5.600 2.400 8.400 1.400 1.400 3 1.600 3.200.8.200-.9-1.600-1.200-4-.6C5 10.400 2.200 12.600 1.400 14.400c.6.600 2.200-.8 3.800-3.800C6.600 7.800 7.400 3.600 6.400 1z" fill="none" stroke="#f03a1c" stroke-width="1.050" stroke-linejoin="round"/>
</svg>
<div class="abs" style="left:1426px;top:159px;width:18px;height:16px;border:1px solid #cacaca;background:#efefef"></div>
<div class="abs" style="left:1428px;top:163px;font-size:10px;color:#4848c4;letter-spacing:-.1px">MS</div>

<div id="status"><span>Server connection is established!</span></div>
</body>
</html>
